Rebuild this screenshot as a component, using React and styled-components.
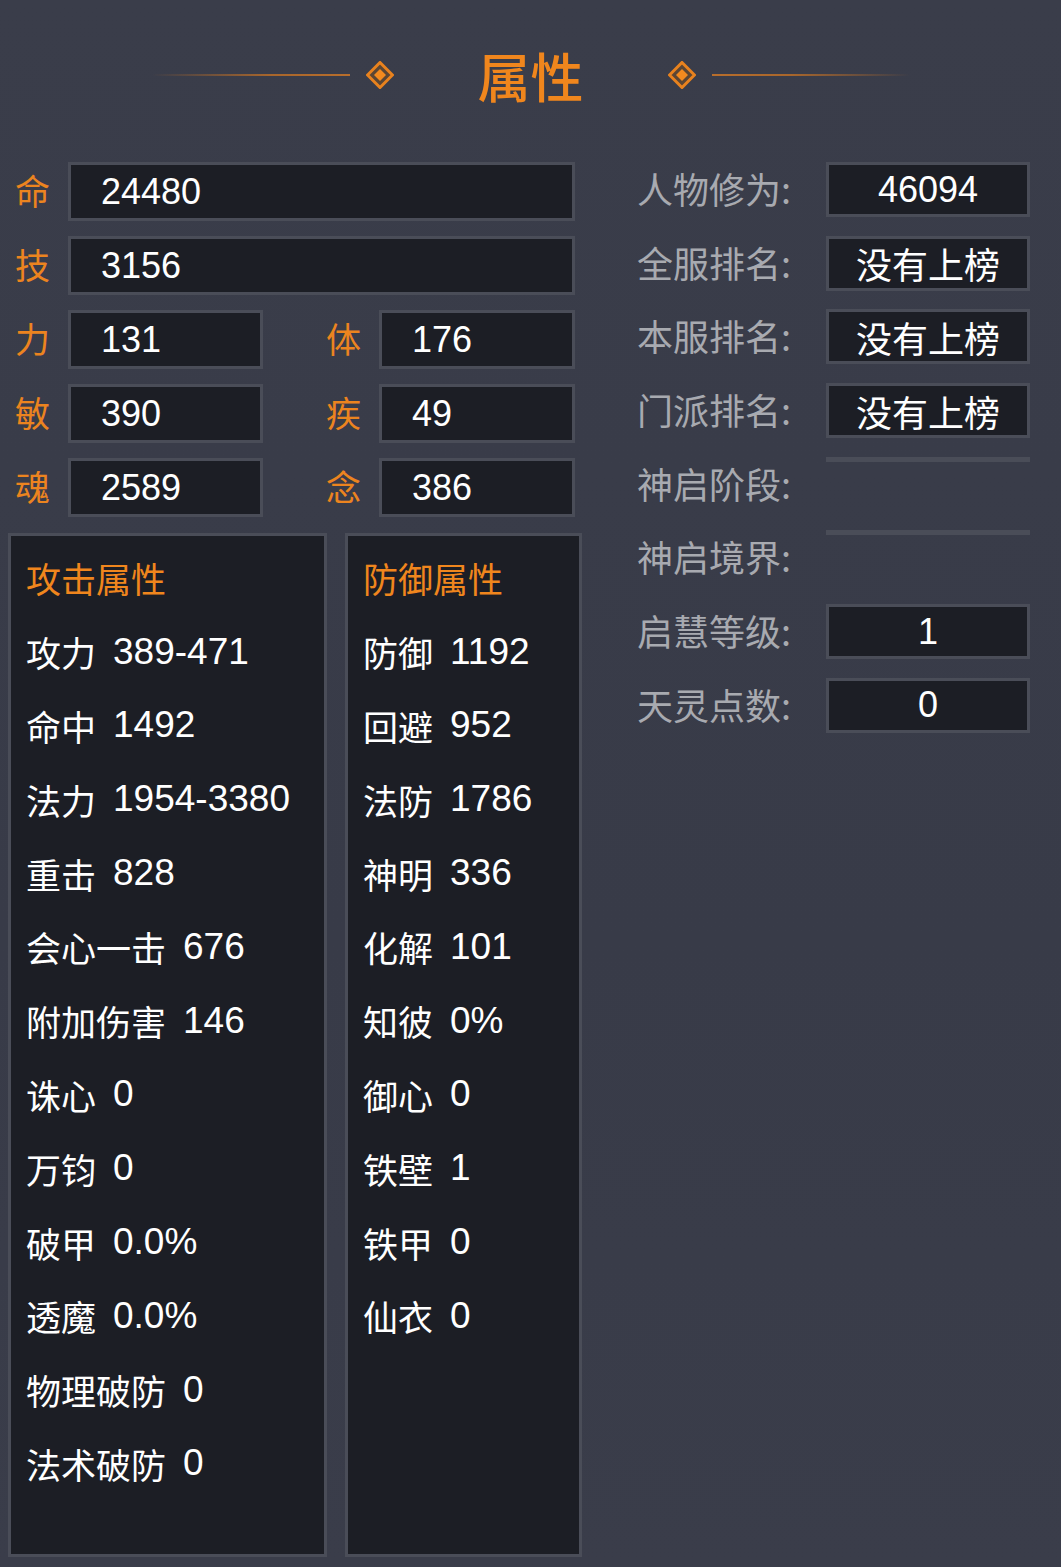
import React from 'react'
import styled, { createGlobalStyle } from 'styled-components'

const GlobalStyle = createGlobalStyle`
  html, body {
    margin: 0;
    padding: 0;
    background: #393c49;
  }
  body {
    font-family: "Liberation Sans", "Noto Sans CJK SC", sans-serif;
  }
`

const ORANGE = '#f0861d'

const Page = styled.div`
  width: 1061px;
  min-height: 1567px;
  box-sizing: border-box;
  padding-bottom: 10px;
  background: linear-gradient(180deg, #3a3d4a 0%, #383b48 60%, #3a3d4a 100%);
`

const Header = styled.div`
  height: 150px;
  display: flex;
  align-items: center;
  justify-content: center;
`

const Rule = styled.div`
  width: 198px;
  height: 2px;
  background: ${p => p.$dir === 'left'
    ? 'linear-gradient(90deg, rgba(176,106,42,0) 0%, #a8662c 60%, #b86e2c 100%)'
    : 'linear-gradient(270deg, rgba(176,106,42,0) 0%, #a8662c 60%, #b86e2c 100%)'};
  margin: ${p => p.$dir === 'left' ? '0 16px 0 0' : '0 0 0 16px'};
`

const Title = styled.h1`
  margin: 0 84px;
  font-family: "Noto Sans CJK SC", sans-serif;
  font-size: 53px;
  font-weight: 500;
  line-height: 1;
  color: ${ORANGE};
`

const Diamond = () => (
  <svg width="28" height="28" viewBox="0 0 28 28">
    <polygon points="14,1.5 26.5,14 14,26.5 1.5,14" fill="#5b4634" stroke="#e8821e" strokeWidth="3" />
    <polygon points="14,8 20,14 14,20 8,14" fill="#f28a1f" />
  </svg>
)

const Body = styled.div`
  display: flex;
  padding: 12px 0 0 8px;
  gap: 54px;
`

const LeftCol = styled.div`
  width: 575px;
  display: flex;
  flex-direction: column;
`

const StatGrid = styled.div`
  display: grid;
  grid-template-columns: 60px 195px 116px 196px;
  grid-auto-rows: 59px;
  row-gap: 15px;
`

const StatLabel = styled.div`
  justify-self: end;
  padding-right: 18px;
  align-self: center;
  margin-top: -4px;
  font-family: "Noto Sans CJK SC", sans-serif;
  font-size: 35px;
  line-height: 1;
  color: #ec841f;
`

const Box = styled.div`
  box-sizing: border-box;
  background: #1c1e25;
  border: 3px solid #4a4d58;
  color: #fff;
  font-size: 36px;
  display: flex;
  align-items: center;
  justify-content: ${p => p.$center ? 'center' : 'flex-start'};
  padding-left: ${p => p.$center ? '0' : '30px'};
  grid-column: ${p => p.$wide ? '2 / 5' : 'auto'};
`

const Panels = styled.div`
  display: flex;
  gap: 18px;
  margin-top: 16px;
`

const Panel = styled.div`
  box-sizing: border-box;
  width: ${p => p.$w}px;
  height: 1024px;
  background: #1c1e25;
  border: 3px solid #4a4d58;
  padding: 5px 0 0 15px;
`

const PanelRow = styled.div`
  height: 73.8px;
  display: flex;
  align-items: center;
  font-size: 35px;
  color: ${p => p.$head ? ORANGE : '#fff'};
  white-space: nowrap;
`

const RowName = styled.span`
  font-family: "Noto Sans CJK SC", sans-serif;
  margin-right: ${p => p.$head ? '0' : '17px'};
`

const RowValue = styled.span`
  font-size: 37px;
`

const RightCol = styled.div`
  display: grid;
  grid-template-columns: 189px 204px;
  grid-auto-rows: 55px;
  row-gap: 18.7px;
  align-content: start;
`

const InfoLabel = styled.div`
  align-self: center;
  margin-top: -3px;
  font-family: "Noto Sans CJK SC", sans-serif;
  font-size: 36px;
  line-height: 1;
  color: #a8aab0;
`

const EmptyBar = styled.div`
  height: 5px;
  background: #4a4d58;
`

const attack = [
  ['攻力', '389-471'],
  ['命中', '1492'],
  ['法力', '1954-3380'],
  ['重击', '828'],
  ['会心一击', '676'],
  ['附加伤害', '146'],
  ['诛心', '0'],
  ['万钧', '0'],
  ['破甲', '0.0%'],
  ['透魔', '0.0%'],
  ['物理破防', '0'],
  ['法术破防', '0'],
]

const defense = [
  ['防御', '1192'],
  ['回避', '952'],
  ['法防', '1786'],
  ['神明', '336'],
  ['化解', '101'],
  ['知彼', '0%'],
  ['御心', '0'],
  ['铁壁', '1'],
  ['铁甲', '0'],
  ['仙衣', '0'],
]

const info = [
  ['人物修为:', '46094'],
  ['全服排名:', '没有上榜'],
  ['本服排名:', '没有上榜'],
  ['门派排名:', '没有上榜'],
  ['神启阶段:', null],
  ['神启境界:', null],
  ['启慧等级:', '1'],
  ['天灵点数:', '0'],
]

const StatPanel = ({ title, rows, width }) => (
  <Panel $w={width}>
    <PanelRow $head><RowName $head>{title}</RowName></PanelRow>
    {rows.map(([name, val]) => (
      <PanelRow key={name}>
        <RowName>{name}</RowName>
        <RowValue>{val}</RowValue>
      </PanelRow>
    ))}
  </Panel>
)

export default function App() {
  return (
    <Page>
      <GlobalStyle />
      <Header>
        <Rule $dir="left" />
        <Diamond />
        <Title>属性</Title>
        <Diamond />
        <Rule $dir="right" />
      </Header>
      <Body>
        <LeftCol>
          <StatGrid>
            <StatLabel>命</StatLabel>
            <Box $wide>24480</Box>
            <StatLabel>技</StatLabel>
            <Box $wide>3156</Box>
            <StatLabel>力</StatLabel>
            <Box>131</Box>
            <StatLabel>体</StatLabel>
            <Box>176</Box>
            <StatLabel>敏</StatLabel>
            <Box>390</Box>
            <StatLabel>疾</StatLabel>
            <Box>49</Box>
            <StatLabel>魂</StatLabel>
            <Box>2589</Box>
            <StatLabel>念</StatLabel>
            <Box>386</Box>
          </StatGrid>
          <Panels>
            <StatPanel title="攻击属性" rows={attack} width={319} />
            <StatPanel title="防御属性" rows={defense} width={237} />
          </Panels>
        </LeftCol>
        <RightCol>
          {info.map(([label, val]) => (
            <React.Fragment key={label}>
              <InfoLabel>{label}</InfoLabel>
              {val === null ? <EmptyBar /> : <Box $center>{val}</Box>}
            </React.Fragment>
          ))}
        </RightCol>
      </Body>
    </Page>
  )
}
